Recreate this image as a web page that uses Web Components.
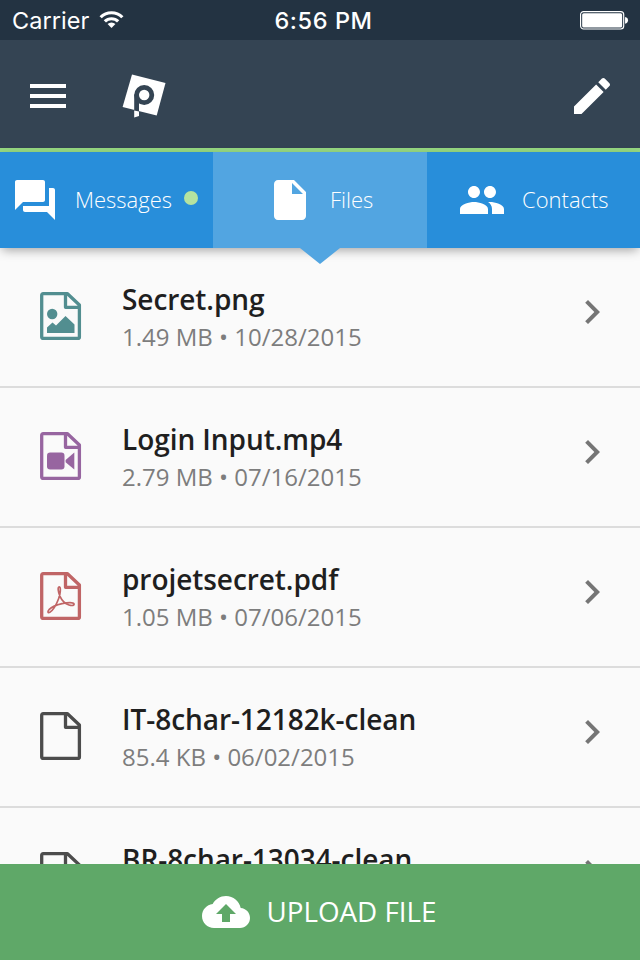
<!DOCTYPE html>
<html lang="en">
<head>
<meta charset="utf-8">
<title>Files</title>
<style>
html, body { margin: 0; height: 100%; }
body { font-family: "Open Sans", "Noto Sans", sans-serif; background: #fafafa; overflow: hidden; }
</style>
</head>
<body>
<file-app></file-app>
<script>
const define = (name, html, setup) => customElements.define(name, class extends HTMLElement {
  constructor() {
    super();
    this.attachShadow({ mode: 'open' }).innerHTML = html;
  }
  connectedCallback() { if (setup) setup(this, this.shadowRoot); }
});

const PAGE = '<path d="M1.700 3.200Q1.700 1.700 3.200 1.700H27.500L39.400 13V44.900Q39.400 46.400 37.900 46.400H3.200Q1.700 46.400 1.700 44.900Z M25.500 1.700V15.300H39.400" fill="none" stroke="currentColor" stroke-width="3.300" stroke-linejoin="round"/>';
const ICONS = {
  menu: ['0 0 24 24', '<path d="M3 18h18v-2H3v2zm0-5h18v-2H3v2zm0-7v2h18V6H3z"/>'],
  edit: ['0 0 24 24', '<path d="M3 17.250V21h3.750L17.810 9.940l-3.750-3.750L3 17.250zM20.710 7.040c.39-.39.39-1.020 0-1.410l-2.340-2.340c-.39-.39-1.020-.39-1.410 0l-1.830 1.830 3.750 3.750 1.830-1.830z"/>'],
  forum: ['0 0 24 24', '<path d="M21 6h-2v9H6v2c0 .55.45 1 1 1h11l4 4V7c0-.55-.45-1-1-1zm-4 6V3c0-.55-.45-1-1-1H3c-.55 0-1 .45-1 1v14l4-4h10c.55 0 1-.45 1-1z"/>'],
  file: ['0 0 24 24', '<path d="M6 2c-1.100 0-1.990.9-1.990 2L4 20c0 1.100.89 2 1.990 2H18c1.100 0 2-.9 2-2V8l-6-6H6zm7 7V3.500L18.500 9H13z"/>'],
  people: ['0 0 24 24', '<path d="M16 11c1.660 0 2.990-1.340 2.990-3S17.660 5 16 5c-1.660 0-3 1.340-3 3s1.340 3 3 3zm-8 0c1.660 0 2.990-1.340 2.990-3S9.660 5 8 5C6.340 5 5 6.340 5 8s1.340 3 3 3zm0 2c-2.330 0-7 1.170-7 3.500V19h14v-2.500c0-2.330-4.670-3.500-7-3.500zm8 0c-.29 0-.62.020-.97.050 1.160.84 1.970 1.970 1.970 3.450V19h6v-2.500c0-2.330-4.670-3.500-7-3.500z"/>'],
  upload: ['0 0 24 24', '<path d="M19.350 10.040C18.670 6.590 15.640 4 12 4 9.110 4 6.600 5.640 5.350 8.040 2.340 8.360 0 10.910 0 14c0 3.310 2.690 6 6 6h13c2.760 0 5-2.240 5-5 0-2.640-2.050-4.780-4.650-4.960zM14 13v4h-4v-4H7l5-5 5 5h-3z"/>'],
  chevron: ['0 0 24 24', '<path d="M10 6L8.590 7.410 13.170 12l-4.580 4.590L10 18l6-6z"/>'],
  logo: ['0 0 44 44', '<path d="M10 0.500L43.500 9L34.700 41.500L0.600 33Z"/><circle cx="22.200" cy="21" r="7.600" fill="none" stroke="#344453" stroke-width="4.800"/><path d="M12.200 20.500H17V38H12.200Z" fill="#344453"/><path d="M12.200 36.400L17 37.600V42L12.200 43.400Z"/>'],
  wifi: ['0 0 26 20', '<g fill="none" stroke="currentColor" stroke-width="3.300"><path d="M1.700 7.400A16 16 0 0 1 24.300 7.400"/><path d="M6.100 11.800A9.800 9.800 0 0 1 19.900 11.800"/></g><path d="M13 18.600L8.900 14.400A5.900 5.900 0 0 1 17.100 14.400Z"/>'],
  battery: ['0 0 50 20', '<rect x="0.600" y="0.600" width="44" height="17.800" rx="3" fill="none" stroke="currentColor" stroke-width="1.200"/><rect x="2.200" y="2.200" width="40.800" height="14.600" rx="1.600"/><path d="M46 6Q49 6.500 49 9.500T46 13Z"/>'],
  doc: ['0 0 42 48', PAGE],
  image: ['0 0 42 48', PAGE + '<circle cx="12.200" cy="22" r="5.200"/><path d="M7 41V35.500L12.500 30.500L16 33.500L25.500 24L34.500 32.500V41Z"/>'],
  video: ['0 0 42 48', PAGE + '<rect x="7" y="20.500" width="17.500" height="17" rx="3.200"/><path d="M34.300 20.500V37.500L25.600 30.200V28Z"/>'],
  pdf: ['0 0 42 48', PAGE + '<path d="M19.300 14.800C17.300 14.800 18.300 20.500 20 24.300C21.700 28 25 31.700 29 33C32.500 34.100 34.500 33.300 34 31.900C33.200 30 27 30.500 22 31.700C17 32.800 11.500 35.200 9 37.700C7.100 39.800 8 41.200 9.800 40.300C12.700 38.500 16.700 31.800 18.700 26.500C20.500 21.500 21 15 19.300 14.800Z" fill="none" stroke="currentColor" stroke-width="1.700" stroke-linejoin="round"/>']
};

define('app-icon', `
  <style>
    :host { display: block; flex: none; width: 48px; height: 48px; }
    svg { display: block; width: 100%; height: 100%; fill: currentColor; overflow: visible; }
  </style><svg aria-hidden="true"></svg>`, (el, root) => {
  const [box, body] = ICONS[el.getAttribute('name')];
  const svg = root.querySelector('svg');
  svg.setAttribute('viewBox', box);
  svg.innerHTML = body;
});

define('status-bar', `
  <style>
    :host { display: grid; grid-template-columns: 1fr auto 1fr; align-items: center; flex: none;
      height: 40px; box-sizing: border-box; padding: 0 11px 0 12px; background: #233342; color: #fff;
      font: 400 23.500px/40px Inter, Roboto, sans-serif; }
    .carrier { display: flex; align-items: center; gap: 10px; letter-spacing: .05px; padding-top: 1px; line-height: 39px; }
    .time { font-weight: 500; letter-spacing: .6px; padding: 1px 0 0 6px; line-height: 39px; }
    .wifi { width: 25px; height: 19.500px; margin-top: -1px; }
    .battery { width: 49px; height: 19.600px; justify-self: end; margin-top: 1px; }
  </style>
  <div class="carrier"><span>Carrier</span><app-icon class="wifi" name="wifi"></app-icon></div>
  <span class="time">6:56 PM</span>
  <app-icon class="battery" name="battery"></app-icon>`);

define('app-header', `
  <style>
    :host { display: flex; align-items: center; flex: none; height: 112px; box-sizing: border-box;
      padding: 4px 24px 0; background: #344453; color: #fff; border-bottom: 4px solid #95d780; }
    .logo { width: 44px; height: 44px; margin-left: 50px; }
    .edit { margin-left: auto; }
  </style>
  <app-icon name="menu"></app-icon>
  <app-icon class="logo" name="logo"></app-icon>
  <app-icon class="edit" name="edit"></app-icon>`);

define('nav-tab', `
  <style>
    :host { display: flex; align-items: center; position: relative; box-sizing: border-box; color: #fff;
      font-size: 22px; font-weight: 300; line-height: 32px; white-space: nowrap; background: #288eda; }
    :host([active]) { background: #52a5e1; }
    :host([active])::after { content: ""; position: absolute; left: 50%; top: 100%; margin-left: -20px;
      border: 20px solid transparent; border-width: 16px 20px 0; border-top-color: #52a5e1; }
    .dot { display: none; width: 14px; height: 14px; border-radius: 50%; background: #b5e3a0; margin: 0 0 4px 12px; }
    :host([unread]) .dot { display: block; }
    .label { padding-bottom: 2px; }
    app-icon { margin-right: 16px; }
  </style>
  <i class="icon"></i><span class="label"><slot></slot></span><i class="dot"></i>`, (el, root) => {
  const icon = document.createElement('app-icon');
  icon.setAttribute('name', el.getAttribute('icon'));
  root.querySelector('.icon').replaceWith(icon);
});

define('tab-bar', `
  <style>
    :host { display: grid; grid-template-columns: 213px 214px 213px; flex: none; height: 96px; position: relative; z-index: 1;
      box-shadow: 0 4px 10px -2px rgba(0,0,0,.36); }
    nav-tab:nth-of-type(1) { padding-left: 11px; }
    nav-tab:nth-of-type(2) { padding-left: 53px; }
    nav-tab:nth-of-type(3) { padding-left: 31px; }
  </style>
  <nav-tab icon="forum" unread>Messages</nav-tab>
  <nav-tab icon="file" active>Files</nav-tab>
  <nav-tab icon="people">Contacts</nav-tab>`);

define('file-row', `
  <style>
    :host { display: flex; align-items: flex-start; box-sizing: border-box; height: 140px; flex: none;
      padding: 32px 24px 0 40px; border-bottom: 2px solid #dcdcdc; }
    .type { width: 42px; height: 48px; margin-top: 12px; color: var(--tint, #4c4c4c); }
    .text { flex: 1; margin-left: 40px; white-space: nowrap; }
    .title { font-size: 28px; letter-spacing: -.06px; font-weight: 600; line-height: 38px; color: #1f1f1f; }
    .meta { font-size: 24px; line-height: 38px; color: #7d7d7d; }
    .go { margin-top: 8px; color: #757575; }
  </style>
  <span class="slot"></span>
  <div class="text"><div class="title"><slot></slot></div><div class="meta"><slot name="meta"></slot></div></div>
  <app-icon class="go" name="chevron"></app-icon>`, (el, root) => {
  const icon = document.createElement('app-icon');
  icon.className = 'type';
  icon.setAttribute('name', el.getAttribute('type'));
  root.querySelector('.slot').replaceWith(icon);
});

define('upload-button', `
  <style>
    :host { display: flex; align-items: center; justify-content: center; gap: 17px; flex: none; height: 96px;
      background: #5fa868; color: #fff; font-size: 27.800px; font-weight: 400; }
    span { padding-bottom: 2px; margin-right: 1px; margin-left: -1px; }
  </style>
  <app-icon name="upload"></app-icon><span><slot></slot></span>`);

define('file-app', `
  <style>
    :host { display: flex; flex-direction: column; width: 640px; height: 960px; overflow: hidden; background: #fafafa; }
    main { flex: 1; min-height: 0; overflow: hidden; display: flex; flex-direction: column; }
  </style>
  <status-bar></status-bar>
  <app-header></app-header>
  <tab-bar></tab-bar>
  <main>
    <file-row type="image" style="--tint:#528e90">Secret.png<span slot="meta">1.49 MB • 10/28/2015</span></file-row>
    <file-row type="video" style="--tint:#9765a0">Login Input.mp4<span slot="meta">2.79 MB • 07/16/2015</span></file-row>
    <file-row type="pdf" style="--tint:#c06566">projetsecret.pdf<span slot="meta">1.05 MB • 07/06/2015</span></file-row>
    <file-row type="doc">IT-8char-12182k-clean<span slot="meta">85.4 KB • 06/02/2015</span></file-row>
    <file-row type="doc">BR-8char-13034-clean</file-row>
  </main>
  <upload-button>UPLOAD FILE</upload-button>`);
</script>
</body>
</html>
